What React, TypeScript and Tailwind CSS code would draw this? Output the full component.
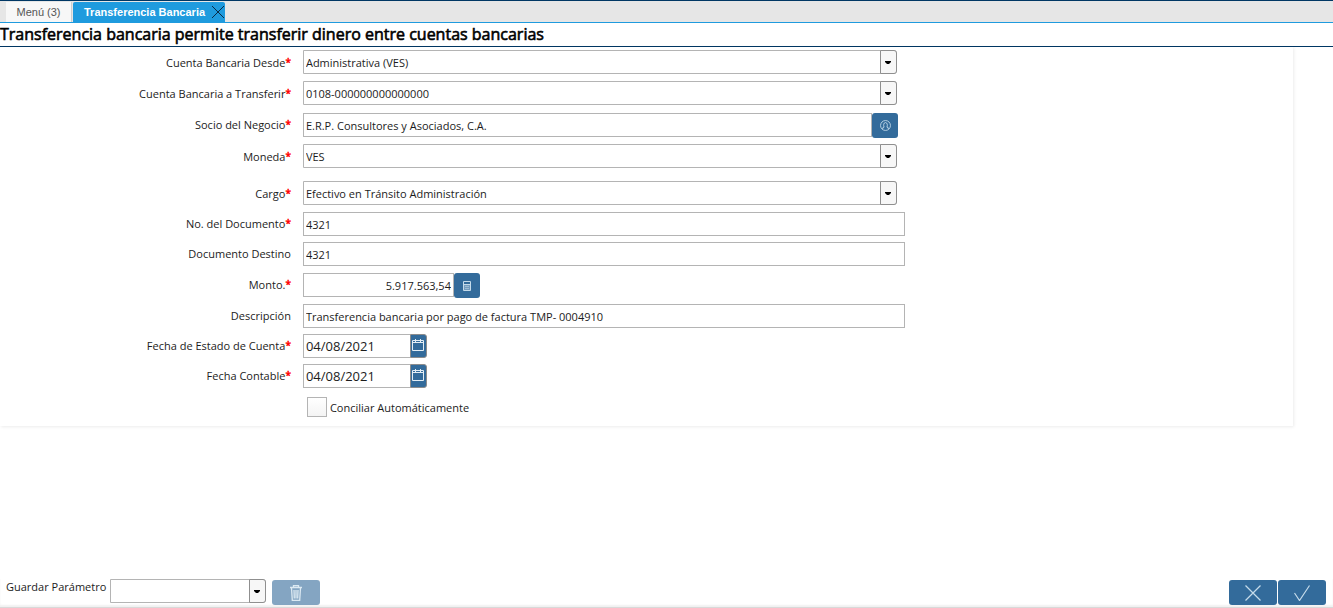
import React, { useState } from "react";

type IconProps = { className?: string };

const CloseIcon = ({ className = "" }: IconProps) => (
  <svg className={className} viewBox="0 0 16 16" fill="none" stroke="currentColor" strokeWidth="1" aria-hidden="true">
    <path d="M2 2l12 12M14 2L2 14" />
  </svg>
);

const CheckIcon = ({ className = "" }: IconProps) => (
  <svg className={className} viewBox="0 0 16 16" fill="none" stroke="currentColor" strokeWidth="1.2" aria-hidden="true">
    <path d="M0.5 8l5 7.5L15.5 0.5" />
  </svg>
);

const TrashIcon = ({ className = "" }: IconProps) => (
  <svg className={className} viewBox="0 0 12 16" fill="none" stroke="currentColor" strokeWidth="1.3" aria-hidden="true">
    <path d="M0 2.500h12M3.500 2.500v-2h5v2M1.500 3l.8 12.400h7.400L10.500 3M4 5l.3 8.500M6 5v8.500M8 5l-.3 8.500" />
  </svg>
);

const UserIcon = ({ className = "" }: IconProps) => (
  <svg className={className} viewBox="0 0 10 10" fill="none" stroke="currentColor" strokeWidth="0.8" aria-hidden="true">
    <circle cx="5" cy="5" r="4.500" />
    <path d="M2.500 8.200V7l1.200-.5C3 5 3.200 2.300 5 2.300S7 5 6.300 6.500L7.500 7v1.200" />
  </svg>
);

const CalculatorIcon = ({ className = "" }: IconProps) => (
  <svg className={className} viewBox="0 0 10 10" fill="none" stroke="currentColor" strokeWidth="1" aria-hidden="true">
    <path d="M1.500 0.500h7v9h-7zM1.500 3.500h7" />
    <path d="M2 4h6v5H2z" fill="currentColor" fillOpacity="0.45" stroke="none" />
    <path d="M3 5.500h4M3 7.500h4" strokeOpacity="0.5" />
  </svg>
);

const CalendarIcon = ({ className = "" }: IconProps) => (
  <svg className={className} viewBox="0 0 12 12" fill="none" stroke="currentColor" strokeWidth="1" aria-hidden="true">
    <path d="M0.500 1.500h11v10h-11zM0.500 3.500h11M3.500 0v3M8.500 0v3" />
  </svg>
);

const boxClass = "block h-6 min-w-0 border border-[#b4b4b4] bg-white px-[2px] text-[#1c1c1c] outline-none";
const blueClass = "flex shrink-0 items-center justify-center rounded-[3px] bg-[#336b9b] text-[#c5dbea]";

function Combo({ id, value }: { id: string; value: string }) {
  return (
    <div className="relative w-full">
      <select
        id={id}
        defaultValue={value}
        className="block h-6 w-full appearance-none rounded-r-[3px] border border-[#b4b4b4] bg-white pt-[2px] pr-5 pl-[2px] text-[#1c1c1c] outline-none"
      >
        <option value={value}>{value}</option>
      </select>
      <span className="pointer-events-none absolute top-0 right-0 flex h-6 w-[17px] items-center justify-center rounded-r-[3px] border border-[#8f8f8f] bg-[#f7f7f7]">
        <svg className="mr-px h-[3px] w-[6px]" viewBox="0 0 6 3" aria-hidden="true">
          <path d="M0 0h6v1L4 3H2L0 1z" fill="#000" />
        </svg>
      </span>
    </div>
  );
}

type RowProps = {
  id: string;
  label: string;
  required?: boolean;
  combo?: boolean;
  height?: string;
  children: React.ReactNode;
};

function Row({ id, label, required = false, combo = false, height = "h-[31px]", children }: RowProps) {
  return (
    <div className={`grid grid-cols-[22.5%_46.6%] gap-x-3 ${height}`}>
      <label htmlFor={id} className={`text-right whitespace-nowrap ${combo ? "leading-[26px]" : "leading-6"}`}>
        {label}
        {required && (
          <span className="align-[1px] text-[10px] leading-none text-[#f00] [-webkit-text-stroke:0.5px_#f00]">*</span>
        )}
      </label>
      <div className={combo ? "pr-2" : ""}>{children}</div>
    </div>
  );
}

function DateBox({ id, value }: { id: string; value: string }) {
  return (
    <div className="flex">
      <input id={id} defaultValue={value} className={`${boxClass} w-[107px] border-r-0 text-[13px]`} />
      <button
        type="button"
        aria-label="Calendario"
        className="flex h-6 w-[17px] items-start justify-center rounded-r-[3px] border border-[#8c8c8c] bg-[#336b9b] pt-1 text-[#e4eef5]"
      >
        <CalendarIcon className="h-3 w-3 shrink-0" />
      </button>
    </div>
  );
}

export default function App() {
  const [auto, setAuto] = useState(false);
  return (
    <div className="flex min-h-screen flex-col bg-white font-['Open_Sans',sans-serif] text-[11px] text-[#1c1c1c]">
      <nav className="flex h-[23px] items-end border-t border-b border-t-[#003764] border-b-[#1f9bde] bg-[#e6e6e6] pl-[6px] font-['Liberation_Sans',sans-serif]">
        <button type="button" className="h-5 w-[66px] border-r border-[#cfcfcf] bg-[#f7f7f7] text-[#555]">
          Menú (3)
        </button>
        <div className="ml-px flex h-5 w-[152px] items-center rounded-t-[2px] bg-[#1f9bde] pl-[11px] font-bold text-white">
          <button type="button" className="whitespace-nowrap">Transferencia Bancaria</button>
          <button type="button" aria-label="Cerrar" className="ml-auto w-[15px] text-[#0a2c47]">
            <CloseIcon className="h-4 w-4" />
          </button>
        </div>
      </nav>
      <h1 className="h-6 border-b border-[#003764] text-[16px] leading-[22px] font-normal text-black [-webkit-text-stroke:0.6px_#000]">
        Transferencia bancaria permite transferir dinero entre cuentas bancarias
      </h1>

      <form id="transfer" className="w-[97%] pt-[3px] pb-[9px] shadow-[1px_1px_3px_rgba(0,0,0,0.08)]">
        <Row id="from" label="Cuenta Bancaria Desde" required combo>
          <Combo id="from" value="Administrativa (VES)" />
        </Row>
        <Row id="to" label="Cuenta Bancaria a Transferir" required combo height="h-8">
          <Combo id="to" value="0108-000000000000000" />
        </Row>
        <Row id="partner" label="Socio del Negocio" required>
          <div className="flex pr-[7px]">
            <input id="partner" defaultValue="E.R.P. Consultores y Asociados, C.A." className={`${boxClass} flex-1`} />
            <button type="button" aria-label="Buscar socio" className={`${blueClass} h-[25px] w-[26px]`}>
              <UserIcon className="h-[11px] w-[11px]" />
            </button>
          </div>
        </Row>
        <Row id="currency" label="Moneda" required combo height="h-[37px]">
          <Combo id="currency" value="VES" />
        </Row>
        <Row id="charge" label="Cargo" required combo>
          <Combo id="charge" value="Efectivo en Tránsito Administración" />
        </Row>
        <Row id="docno" label="No. del Documento" required height="h-[30px]">
          <input id="docno" defaultValue="4321" className={`${boxClass} w-full`} />
        </Row>
        <Row id="target" label="Documento Destino">
          <input id="target" defaultValue="4321" className={`${boxClass} w-full`} />
        </Row>
        <Row id="amount" label="Monto." required>
          <div className="flex">
            <input id="amount" defaultValue="5.917.563,54" className={`${boxClass} w-[151px] text-right`} />
            <button type="button" aria-label="Calculadora" className={`${blueClass} h-[25px] w-[26px]`}>
              <CalculatorIcon className="h-[10px] w-[10px]" />
            </button>
          </div>
        </Row>
        <Row id="description" label="Descripción" height="h-[30px]">
          <input id="description" defaultValue="Transferencia bancaria por pago de factura TMP- 0004910" className={`${boxClass} w-full`} />
        </Row>
        <Row id="statement" label="Fecha de Estado de Cuenta" required height="h-[30px]">
          <DateBox id="statement" value="04/08/2021" />
        </Row>
        <Row id="account" label="Fecha Contable" required height="h-[30px]">
          <DateBox id="account" value="04/08/2021" />
        </Row>
        <div className="grid grid-cols-[22.5%_46.6%] gap-x-3 pt-[3px]">
          <label className="col-start-2 flex items-center gap-[3px] pl-1">
            <input
              type="checkbox"
              checked={auto}
              onChange={(e) => setAuto(e.target.checked)}
              className="h-5 w-5 appearance-none border border-[#b4b4b4] bg-gradient-to-b from-white to-[#f4f4f4] checked:bg-[#336b9b]"
            />
            <span className="pt-[2px]">Conciliar Automáticamente</span>
          </label>
        </div>
      </form>

      <footer className="mt-auto flex items-start border-b border-[#d9d9d9] pr-[7px] pb-[2px] pl-[6px] shadow-[inset_0_-2px_2px_rgba(0,0,0,0.06)]">
        <label htmlFor="saved" className="w-[104px] leading-4 whitespace-nowrap">Guardar Parámetro</label>
        <div className="w-[156px]"><Combo id="saved" value="" /></div>
        <button type="button" disabled aria-label="Eliminar" className={`${blueClass} mt-px ml-[6px] h-[25px] w-12 opacity-60`}>
          <TrashIcon className="h-4 w-3" />
        </button>
        <div className="mt-px ml-auto flex gap-px">
          <button type="button" aria-label="Cancelar" className={`${blueClass} h-[25px] w-12`}>
            <CloseIcon className="h-5 w-5" />
          </button>
          <button type="submit" form="transfer" aria-label="Aceptar" className={`${blueClass} h-[25px] w-12`}>
            <CheckIcon className="h-4 w-4" />
          </button>
        </div>
      </footer>
    </div>
  );
}
